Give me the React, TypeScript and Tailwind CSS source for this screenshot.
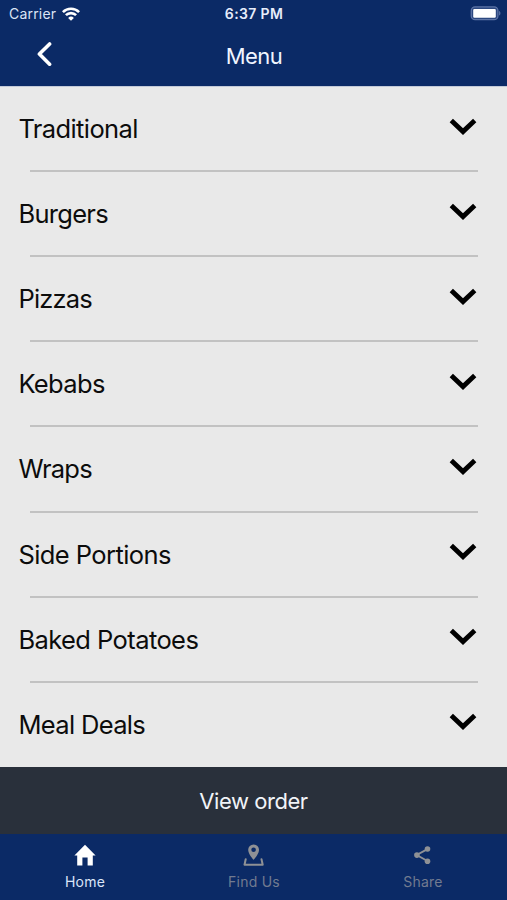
import type { ReactNode } from "react"

const categories = [
  { name: "Traditional", tracking: "tracking-[-0.6px]" },
  { name: "Burgers", tracking: "tracking-[-0.7px]" },
  { name: "Pizzas", tracking: "tracking-[-0.8px]" },
  { name: "Kebabs", tracking: "tracking-[-0.65px]" },
  { name: "Wraps", tracking: "tracking-[-0.75px]" },
  { name: "Side Portions", tracking: "tracking-[-0.58px]" },
  { name: "Baked Potatoes", tracking: "tracking-[-0.58px]" },
  { name: "Meal Deals", tracking: "tracking-[-0.65px]" },
]

function StatusBar() {
  return (
    <div className="grid h-[27px] grid-cols-3 items-center pl-[9px] pr-[6px] text-white">
      <div className="flex items-center gap-[6px]">
        <span className="text-[14px] leading-none tracking-[0.2px] text-[#dbe4f5]">Carrier</span>
        <svg className="h-[14px] w-[18px]" viewBox="0 0 18 14" fill="none" stroke="currentColor" strokeWidth="2.6">
          <path d="M0.9 5.1a11.5 11.5 0 0 1 16.2 0" />
          <path d="M3.9 8.2a7.2 7.2 0 0 1 10.2 0" />
          <path d="M9 13.8 6.1 10.9a4.1 4.1 0 0 1 5.8 0Z" fill="currentColor" stroke="none" />
        </svg>
      </div>
      <span className="pr-[2px] text-center text-[14px] font-semibold leading-none tracking-[0.35px] text-[#e6edfb]">6:37 PM</span>
      <svg className="h-[15px] w-[31px] justify-self-end" viewBox="0 0 31 15">
        <rect x="1.3" y="0.9" width="26.6" height="12.8" rx="3.8" fill="#2c4880" stroke="#5d74a6" strokeWidth="1.3" />
        <rect x="3.2" y="2.9" width="22.6" height="8.9" rx="1.2" fill="#fff" />
        <path d="M29.1 5v4.6c1.8-.6 1.8-4 0-4.6Z" fill="#5d74a6" />
      </svg>
    </div>
  )
}

function Header() {
  return (
    <header className="h-[86px] shrink-0 bg-[#0b2a66]">
      <StatusBar />
      <div className="grid h-[58px] grid-cols-[100px_1fr_100px] items-center">
        <button className="flex justify-start pl-[36px] pb-[5px] text-white" aria-label="Back">
          <svg className="h-[26px] w-[16px]" viewBox="0 0 16 26" fill="none" stroke="currentColor" strokeWidth="3.6" strokeLinecap="round" strokeLinejoin="round">
            <path d="M13.6 3 3.4 13l10.2 10.2" />
          </svg>
        </button>
        <h1 className="pl-px text-center text-[22px] leading-none tracking-[-0.5px] text-[#f0f5ff]">Menu</h1>
      </div>
    </header>
  )
}

function CategoryRow({ name, tracking }: { name: string; tracking: string }) {
  return (
    <li className="group flex h-[85.12px] shrink-0 flex-col">
      <button className="flex flex-1 items-center justify-between pl-[18.4px] pr-[30px] pt-[0.5px] text-left">
        <span className={`text-[25.5px] leading-none text-[#0c0c0c] ${tracking}`}>{name}</span>
        <svg className="mb-[4.4px] h-[18px] w-[28px]" viewBox="0 0 28 18" fill="none" stroke="#000" strokeWidth="4.8">
          <path d="M2.3 2.6 14 13.6 25.7 2.6" />
        </svg>
      </button>
      <div className="ml-[30px] mr-[29px] h-[2px] bg-[#c2c2c2] group-last:bg-transparent" />
    </li>
  )
}

function Tab({ label, active = false, children }: { label: string; active?: boolean; children: ReactNode }) {
  return (
    <button className={`flex flex-1 flex-col items-center pt-[9px] ${active ? "text-white" : "text-[#8f9195]"}`}>
      <svg className="h-[24px] w-[24px]" viewBox="0 0 24 24">{children}</svg>
      <span className={`mt-[8px] pl-px text-[14px] leading-none tracking-[0.25px] ${active ? "text-[#dbe5f8]" : "text-[#727b90]"}`}>
        {label}
      </span>
    </button>
  )
}

export default function App() {
  return (
    <div className="flex h-[900px] w-[507px] flex-col overflow-hidden bg-[#e9e9e9] font-['Inter',sans-serif]">
      <Header />

      <main className="flex-1 overflow-hidden border-t border-[#c3cad8]">
        <ul className="flex flex-col">
          {categories.map((c) => (
            <CategoryRow key={c.name} {...c} />
          ))}
        </ul>
      </main>

      <button className="flex h-[67px] shrink-0 items-center justify-center bg-[#29303b] text-[22px] leading-none tracking-[-0.45px] text-[#f1f4f8]">
        View order
      </button>

      <nav className="flex h-[66px] shrink-0 bg-[#0b2a66]">
        <Tab label="Home" active>
          <path d="M12 1.8 22.6 12.4h-2.8v10.2h-5.2v-8h-5.2v8H4.2V12.4H1.4Z" fill="currentColor" />
        </Tab>
        <Tab label="Find Us">
          <path
            d="M11.6 1.4a5.4 5.4 0 0 0-5.4 5.5c0 4 5.4 9.9 5.4 9.9s5.4-5.9 5.4-9.9A5.4 5.4 0 0 0 11.6 1.4Zm0 3.1a2.3 2.3 0 1 1 0 4.6 2.3 2.3 0 0 1 0-4.6Z"
            fill="currentColor"
            fillRule="evenodd"
          />
          <path d="M3.7 16.3 2.5 21.7h18.2L19.5 16.3" fill="none" stroke="currentColor" strokeWidth="2" strokeLinecap="round" strokeLinejoin="round" />
        </Tab>
        <Tab label="Share">
          <path d="M16.5 6.2 5.7 12l10.8 6" fill="none" stroke="currentColor" strokeWidth="1.9" />
          <circle cx="16.5" cy="6" r="2.8" fill="currentColor" />
          <circle cx="5.9" cy="12.1" r="2.8" fill="currentColor" />
          <circle cx="16.5" cy="18.2" r="2.8" fill="currentColor" />
        </Tab>
      </nav>
    </div>
  )
}
